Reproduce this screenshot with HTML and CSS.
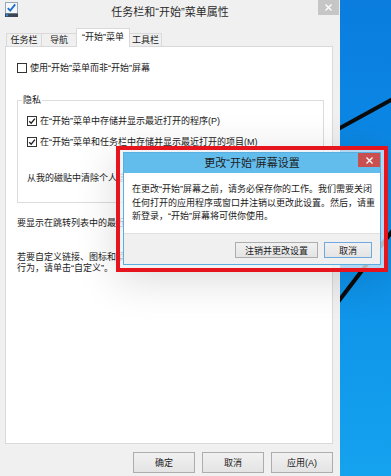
FILE: index.html
```html
<!DOCTYPE html>
<html lang="zh-CN">
<head>
<meta charset="utf-8">
<title>任务栏和“开始”菜单属性</title>
<link rel="stylesheet" href="styles.css">
</head>
<body>
<div class="screen">
  <div class="win">
    <div class="titlebar">
      <svg class="app-icon" width="14" height="15" viewBox="0 0 14 15">
        <rect x="0.5" y="0.5" width="12" height="11" fill="#f5f7fa" stroke="#9aa6b2"/>
        <path d="M2.8 6.2 L5.2 8.6 L10.2 2.4" fill="none" stroke="#1b6fd3" stroke-width="1.8"/>
        <rect x="0" y="11.5" width="13" height="3.5" fill="#3b4656"/>
        <rect x="1" y="12.3" width="2" height="2" fill="#2f8be0"/>
      </svg>
      <div class="title">任务栏和“开始”菜单属性</div>
      <div class="close close-gray">
        <svg width="7" height="7" viewBox="0 0 7 7"><path d="M0.5 0.5 L6.5 6.5 M6.5 0.5 L0.5 6.5" stroke="#fff" stroke-width="1.3"/></svg>
      </div>
    </div>
    <div class="tabs">
      <div class="tab t1">任务栏</div>
      <div class="tab t2">导航</div>
      <div class="tab t3 active">“开始”菜单</div>
      <div class="tab t4">工具栏</div>
    </div>
    <div class="panel">
      <div class="row r1"><span class="cb"></span>使用“开始”菜单而非“开始”屏幕</div>
      <div class="group">
        <div class="legend">隐私</div>
        <div class="row g1"><span class="cb"><svg width="8" height="8" viewBox="0 0 8 8"><path d="M1.2 4.2 L3.2 6.2 L6.9 1.6" fill="none" stroke="#222" stroke-width="1.4"/></svg></span>在“开始”菜单中存储并显示最近打开的程序(P)</div>
        <div class="row g2"><span class="cb"><svg width="8" height="8" viewBox="0 0 8 8"><path d="M1.2 4.2 L3.2 6.2 L6.9 1.6" fill="none" stroke="#222" stroke-width="1.4"/></svg></span>在“开始”菜单和任务栏中存储并显示最近打开的项目(M)</div>
        <div class="row g3">从我的磁贴中清除个人信息</div>
      </div>
      <div class="row r2">要显示在跳转列表中的最近使用的项目数(N):</div>
      <div class="para">若要自定义链接、图标和菜单在“开始”菜单中的外观和<br>行为，请单击“自定义”。</div>
    </div>
    <div class="actions">
      <div class="btn">确定</div>
      <div class="btn">取消</div>
      <div class="btn">应用(A)</div>
    </div>
  </div>
  <div class="desktop">
    <svg width="51" height="476" viewBox="0 0 51 476">
      <path d="M53 99 L-2 129" stroke="#0b0b0b" stroke-width="4"/>
      <path d="M53 230 L-2 302" stroke="#0b0b0b" stroke-width="4"/>
    </svg>
  </div>
  <div class="mark">
    <div class="dialog">
      <div class="dlg-title">
        <span></span>
        <div class="dlg-caption">更改“开始”屏幕设置</div>
        <div class="close close-red">
          <svg width="7" height="7" viewBox="0 0 7 7"><path d="M0.5 0.5 L6.5 6.5 M6.5 0.5 L0.5 6.5" stroke="#fff" stroke-width="1.3"/></svg>
        </div>
      </div>
      <div class="dlg-body">在更改“开始”屏幕之前，请务必保存你的工作。我们需要关闭<br>任何打开的应用程序或窗口并注销以更改此设置。然后，请重<br>新登录，“开始”屏幕将可供你使用。</div>
      <div class="dlg-footer">
        <div class="btn dbtn wide">注销并更改设置</div>
        <div class="btn dbtn default">取消</div>
      </div>
    </div>
  </div>
</div>
</body>
</html>
```

FILE: styles.css
```css
* { box-sizing: border-box; }
html, body { margin: 0; padding: 0; }
body {
  font-family: "Liberation Sans", "Noto Sans CJK SC", sans-serif;
  font-size: 9px;
  color: #1a1a1a;
  background: #0a7fe0;
}
.screen {
  position: relative;
  width: 391px;
  height: 476px;
  display: flex;
  overflow: hidden;
}
.win {
  width: 340px;
  height: 476px;
  background: #f0f0f0;
  display: flex;
  flex-direction: column;
}
.titlebar {
  height: 28px;
  display: grid;
  grid-template-columns: 1fr auto 1fr;
  align-items: start;
}
.app-icon { margin: 2px 0 0 5px; display: block; }
.title {
  font-size: 11px;
  line-height: 14px;
  margin-top: 5px;
  color: #2a2a2a;
  white-space: nowrap;
}
.close {
  justify-self: end;
  display: flex;
  align-items: center;
  justify-content: center;
}
.close-gray {
  width: 21px;
  height: 15px;
  margin-right: 1px;
  background: #c6c6c6;
}
.close svg { display: block; }

.tabs {
  height: 19px;
  margin-bottom: -1px;
  display: flex;
  align-items: flex-end;
  padding-left: 6px;
}
.tab {
  position: relative;
  height: 13px;
  margin-bottom: 1px;
  margin-left: -1px;
  border: 1px solid #d9d9d9;
  border-bottom: none;
  background: #f0f0f0;
  text-align: center;
  line-height: 12px;
  white-space: nowrap;
}
.t1 { width: 36px; margin-left: 0; }
.t2 { width: 36px; }
.t3 { width: 54px; }
.t4 { width: 33px; }
.tab.active {
  height: 19px;
  margin-bottom: 0;
  background: #fff;
  z-index: 1;
  padding-top: 2px;
}

.panel {
  margin: 0 7px 0 5px;
  height: 398px;
  border: 1px solid #d9d9d9;
  background: #fff;
  padding-left: 11px;
}
.row {
  height: 14px;
  line-height: 14px;
  display: flex;
  align-items: center;
  white-space: nowrap;
}
.cb {
  width: 10px;
  height: 10px;
  border: 1px solid #333;
  background: #fff;
  margin-right: 3px;
  flex: none;
  display: flex;
  align-items: center;
  justify-content: center;
}
.cb svg { display: block; }
.r1 { margin-top: 14px; }
.group {
  margin-top: 25px;
  margin-right: 8px;
  border: 1px solid #dcdcdc;
  padding: 0 0 17px 9px;
}
.legend {
  width: fit-content;
  margin: -7px 0 0 -5px;
  padding: 0 1px;
  background: #fff;
  line-height: 12px;
  height: 12px;
}
.g1 { margin-top: 8px; }
.g2 { margin-top: 7px; }
.g3 { margin-top: 22px; }
.r2 { margin-top: 13px; }
.para {
  margin-top: 22px;
  line-height: 11px;
  white-space: nowrap;
}

.actions {
  display: flex;
  justify-content: flex-end;
  gap: 7px;
  padding: 8px 7px 0 0;
}
.btn {
  width: 62px;
  height: 21px;
  border: 1px solid #adadad;
  background: linear-gradient(#f1f1f1, #e4e4e4);
  display: flex;
  align-items: center;
  justify-content: center;
  white-space: nowrap;
  color: #1a1a1a;
}

.desktop {
  flex: 1;
  background: linear-gradient(180deg, #0a7ddf 0%, #0c8de7 45%, #15a2ee 100%);
}
.desktop svg { display: block; }

.mark {
  position: absolute;
  left: 116px;
  top: 146px;
  width: 272px;
  height: 126px;
  border: 4px solid #e5141d;
  padding: 2px 3px 3px 3px;
  background: rgba(236, 240, 244, 0.75);
  box-shadow: 0 8px 40px rgba(0, 0, 0, 0.14);
}
.dialog {
  height: 113px;
  border: 1px solid #5aaee2;
  background: #fff;
  display: flex;
  flex-direction: column;
}
.dlg-title {
  height: 20px;
  background: #63bdec;
  display: grid;
  grid-template-columns: 1fr auto 1fr;
  align-items: start;
}
.dlg-caption {
  font-size: 11px;
  line-height: 20px;
  color: #1c1c1c;
  white-space: nowrap;
}
.close-red {
  width: 22px;
  height: 14px;
  background: #c9504f;
}
.dlg-body {
  height: 60px;
  padding: 10px 0 0 8px;
  line-height: 13.5px;
  white-space: nowrap;
}
.dlg-footer {
  flex: 1;
  background: #f0f0f0;
  border-top: 1px solid #e0e0e0;
  display: flex;
  justify-content: flex-end;
  gap: 6px;
  padding: 8px 8px 0 0;
}
.dbtn { height: 16px; }
.wide { width: 83px; }
.default { width: 48px; border-color: #6ea9e0; }
```
